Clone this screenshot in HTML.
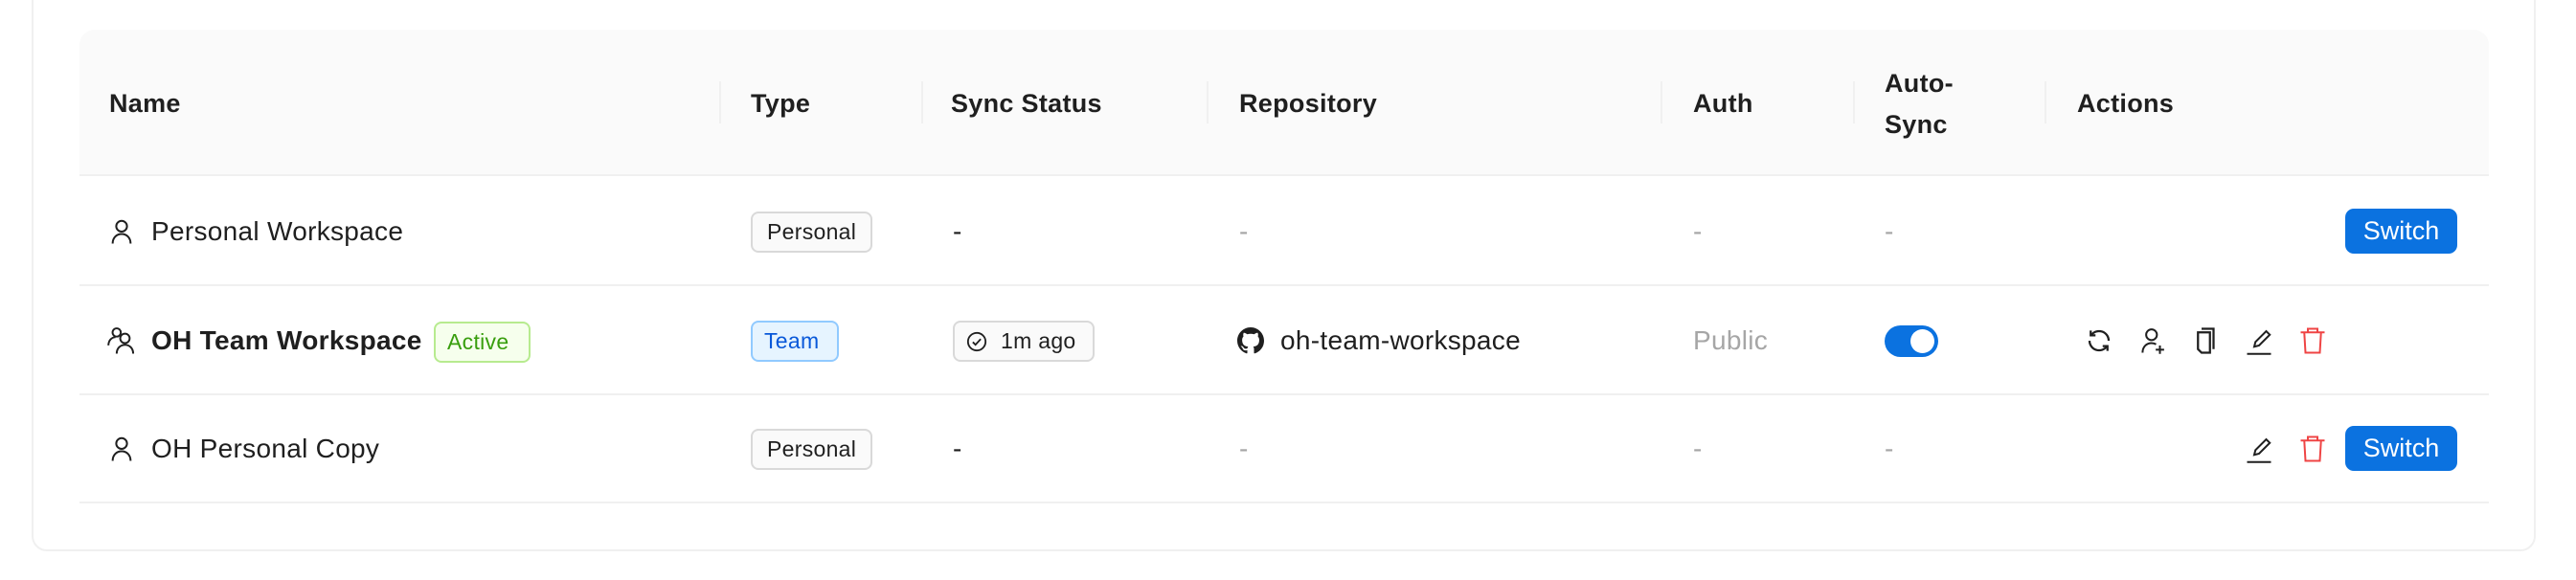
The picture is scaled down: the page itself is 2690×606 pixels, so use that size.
<!DOCTYPE html>
<html><head><meta charset="utf-8"><style>
*{box-sizing:border-box;margin:0;padding:0}
body{width:2690px;height:606px;background:#fff;font-family:"Liberation Sans",Arial,sans-serif;color:#1f1f1f;position:relative;overflow:hidden}
.card{position:absolute;left:33px;top:-20px;width:2615px;height:596px;border:2px solid #f0f0f0;border-radius:16px;background:#fff}
.head{position:absolute;left:83px;top:31px;width:2516px;height:153px;background:#fafafa;border-radius:16px 16px 0 0;border-bottom:2px solid #f0f0f0}
.line{position:absolute;left:83px;width:2516px;height:2px;background:#f0f0f0}
.sep{position:absolute;top:85px;width:2px;height:44px;background:#f0f0f0}
.t{position:absolute;white-space:nowrap;font-size:28px;line-height:32px;letter-spacing:0.3px}
.h{font-weight:bold;top:92px;font-size:27px}
.badge{position:absolute;height:43px;border:2px solid #d9d9d9;background:#fafafa;border-radius:8px;font-size:23px;line-height:39px;padding:0 15px;white-space:nowrap;color:#1f1f1f;letter-spacing:0.3px}
.gray{color:#a6a6a6}
.btn{position:absolute;left:2449px;width:117px;height:47px;background:#0b72e0;border-radius:9px;color:#fff;font-size:27px;line-height:47px;text-align:center}
svg{position:absolute}
</style></head><body>
<div class="card"></div>
<div class="head"></div>
<div class="sep" style="left:751px"></div>
<div class="sep" style="left:962px"></div>
<div class="sep" style="left:1260px"></div>
<div class="sep" style="left:1734px"></div>
<div class="sep" style="left:1935px"></div>
<div class="sep" style="left:2135px"></div>
<div class="t h" style="left:114px">Name</div>
<div class="t h" style="left:784px">Type</div>
<div class="t h" style="left:993px">Sync Status</div>
<div class="t h" style="left:1294px">Repository</div>
<div class="t h" style="left:1768px">Auth</div>
<div class="t h" style="left:1968px;top:66px;line-height:43px">Auto-<br>Sync</div>
<div class="t h" style="left:2169px">Actions</div>

<div class="line" style="top:297px"></div>
<div class="line" style="top:411px"></div>
<div class="line" style="top:524px"></div>

<!-- row 1 -->
<svg style="left:112px;top:227px" width="30" height="30" viewBox="0 0 24 24" fill="none" stroke="#1f1f1f" stroke-width="1.6"><circle cx="12" cy="7.5" r="4.5"/><path d="M4.5 22c0-5 3.3-8 7.5-8s7.5 3 7.5 8"/></svg>
<div class="t" style="left:158px;top:226px">Personal Workspace</div>
<div class="badge" style="left:784px;top:221px">Personal</div>
<div class="t" style="left:995px;top:226px">-</div>
<div class="t gray" style="left:1294px;top:226px">-</div>
<div class="t gray" style="left:1768px;top:226px">-</div>
<div class="t gray" style="left:1968px;top:226px">-</div>
<div class="btn" style="top:218px">Switch</div>

<!-- row 2 -->
<svg style="left:112px;top:341px" width="32" height="30" viewBox="0 0 26 24" fill="none" stroke="#1f1f1f" stroke-width="1.6"><circle cx="8" cy="5" r="3.5"/><path d="M1 16c0-4 2.5-7 6-7"/><circle cx="15" cy="10" r="4"/><path d="M8 23c0-4.5 3-7.5 7-7.5s7 3 7 7.5"/></svg>
<div class="t" style="left:158px;top:340px;font-weight:bold">OH Team Workspace</div>
<div class="badge" style="left:453px;top:336px;width:101px;border-color:#b7eb8f;background:#f6ffed;color:#389e0d;padding:0 12px">Active</div>
<div class="badge" style="left:784px;top:335px;width:92px;border-color:#91caff;background:#e6f4ff;color:#0958d9;padding:0 12px">Team</div>
<div class="badge" style="left:995px;top:335px;width:148px;padding-left:48px">1m ago</div>
<svg style="left:1009px;top:346px" width="22" height="22" viewBox="0 0 24 24" fill="none" stroke="#1f1f1f" stroke-width="2"><circle cx="12" cy="12" r="10"/><path d="M7.5 12.5l3 3 6-6.5"/></svg>
<svg style="left:1292px;top:342px" width="28" height="28" viewBox="0 0 16 16"><path fill="#1f1f1f" d="M8 0C3.58 0 0 3.58 0 8c0 3.54 2.29 6.53 5.47 7.59.4.07.55-.17.55-.38 0-.19-.01-.82-.01-1.49-2.01.37-2.53-.49-2.69-.94-.09-.23-.48-.94-.82-1.13-.28-.15-.68-.52-.01-.53.63-.01 1.08.58 1.23.82.72 1.21 1.87.87 2.33.66.07-.52.28-.87.51-1.07-1.78-.2-3.64-.89-3.64-3.95 0-.87.31-1.59.82-2.15-.08-.2-.36-1.02.08-2.12 0 0 .67-.21 2.2.82.64-.18 1.32-.27 2-.27.68 0 1.36.09 2 .27 1.53-1.04 2.2-.82 2.2-.82.44 1.1.16 1.92.08 2.12.51.56.82 1.27.82 2.15 0 3.07-1.87 3.75-3.65 3.95.29.25.54.73.54 1.48 0 1.07-.01 1.93-.01 2.2 0 .21.15.46.55.38A8.013 8.013 0 0 0 16 8c0-4.42-3.58-8-8-8z"/></svg>
<div class="t" style="left:1337px;top:340px">oh-team-workspace</div>
<div class="t gray" style="left:1768px;top:340px">Public</div>
<div style="position:absolute;left:1968px;top:340px;width:56px;height:33px;border-radius:17px;background:#0b72e0"></div>
<div style="position:absolute;left:1995px;top:344px;width:25px;height:25px;border-radius:13px;background:#fff"></div>
<!-- actions -->
<svg style="left:2177px;top:341px" width="30" height="30" viewBox="0 0 24 24" fill="none" stroke="#1f1f1f" stroke-width="1.8"><path d="M20 12a8 8 0 0 0-14.5-4.7M4 12a8 8 0 0 0 14.5 4.7"/><path d="M5 3.5v4h4M19 20.5v-4h-4"/></svg>
<svg style="left:2233px;top:341px" width="30" height="30" viewBox="0 0 24 24" fill="none" stroke="#1f1f1f" stroke-width="1.6"><circle cx="11" cy="7" r="4.5"/><path d="M3.5 22c0-5 3.3-8 7.5-8 1.5 0 2.8.4 3.8 1"/><path d="M18 16v7M14.5 19.5h7"/></svg>
<svg style="left:2289px;top:341px" width="30" height="30" viewBox="0 0 24 24" fill="none" stroke="#1f1f1f" stroke-width="1.8"><path d="M8 2h10v17"/><path d="M5 5h10v17H8l-3-3z"/></svg>
<svg style="left:2344px;top:341px" width="30" height="30" viewBox="0 0 24 24" fill="none" stroke="#1f1f1f" stroke-width="1.6"><path d="M8 17l1-4 9-9 3 3-9 9z"/><path d="M2 23h20"/></svg>
<svg style="left:2400px;top:341px" width="30" height="30" viewBox="0 0 24 24" fill="none" stroke="#ef4444" stroke-width="1.6"><path d="M2 5h20M8 5V2h8v3M5 5l1 17h12l1-17"/></svg>

<!-- row 3 -->
<svg style="left:112px;top:454px" width="30" height="30" viewBox="0 0 24 24" fill="none" stroke="#1f1f1f" stroke-width="1.6"><circle cx="12" cy="7.5" r="4.5"/><path d="M4.5 22c0-5 3.3-8 7.5-8s7.5 3 7.5 8"/></svg>
<div class="t" style="left:158px;top:453px">OH Personal Copy</div>
<div class="badge" style="left:784px;top:448px">Personal</div>
<div class="t" style="left:995px;top:453px">-</div>
<div class="t gray" style="left:1294px;top:453px">-</div>
<div class="t gray" style="left:1768px;top:453px">-</div>
<div class="t gray" style="left:1968px;top:453px">-</div>
<svg style="left:2344px;top:454px" width="30" height="30" viewBox="0 0 24 24" fill="none" stroke="#1f1f1f" stroke-width="1.6"><path d="M8 17l1-4 9-9 3 3-9 9z"/><path d="M2 23h20"/></svg>
<svg style="left:2400px;top:454px" width="30" height="30" viewBox="0 0 24 24" fill="none" stroke="#ef4444" stroke-width="1.6"><path d="M2 5h20M8 5V2h8v3M5 5l1 17h12l1-17"/></svg>
<div class="btn" style="top:445px">Switch</div>
</body></html>
